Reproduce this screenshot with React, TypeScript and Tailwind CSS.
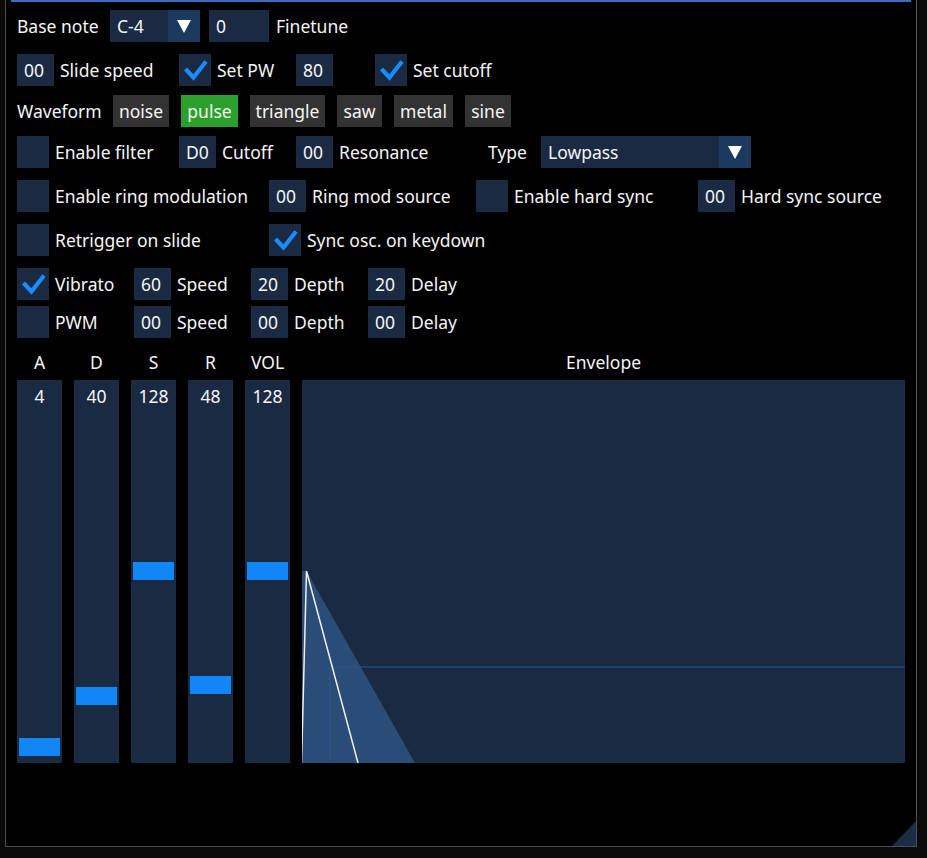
import React from "react";

const FONT = { fontFamily: '"Noto Sans", "Open Sans", sans-serif' };

function Frame({ value, w = 37 }: { value: string; w?: number }) {
	return (
		<div
			className="h-8 shrink-0 bg-[#1a2a42] pl-[7px] flex items-center whitespace-nowrap"
			style={{ width: w }}
		>
			{value}
		</div>
	);
}

function Check({ on = false }: { on?: boolean }) {
	return (
		<div className="w-8 h-8 shrink-0 bg-[#1a2a42]">
			{on && (
				<svg width="32" height="32" viewBox="0 0 32 32">
					<path
						d="M6.5 15 L14.5 23.5 L27 7.5"
						fill="none"
						stroke="#1a8cff"
						strokeWidth="4.2"
					/>
				</svg>
			)}
		</div>
	);
}

function Label({ text, w }: { text: string; w?: number }) {
	return (
		<span
			className="shrink-0 whitespace-nowrap"
			style={w ? { width: w } : undefined}
		>
			{text}
		</span>
	);
}

function Combo({ value, w, arrowW = 32 }: { value: string; w: number; arrowW?: number }) {
	return (
		<div className="h-8 shrink-0 flex" style={{ width: w }}>
			<div className="flex-1 bg-[#1a2a42] pl-[7px] flex items-center">{value}</div>
			<div
				className="bg-[#1c3a5e] flex items-center justify-center"
				style={{ width: arrowW }}
			>
				<svg width="14" height="13" viewBox="0 0 14 13">
					<path d="M0 0 H14 L7 13 Z" fill="#ffffff" />
				</svg>
			</div>
		</div>
	);
}

function WaveBtn({ text, w, active = false }: { text: string; w: number; active?: boolean }) {
	return (
		<div
			className={
				"h-8 shrink-0 flex items-center justify-center " +
				(active ? "bg-[#2ca02c]" : "bg-[#333333]")
			}
			style={{ width: w }}
		>
			{text}
		</div>
	);
}

const sliders = [
	{ name: "A", value: "4", grab: 358 },
	{ name: "D", value: "40", grab: 307 },
	{ name: "S", value: "128", grab: 182 },
	{ name: "R", value: "48", grab: 296 },
	{ name: "VOL", value: "128", grab: 182 },
];

export default function App() {
	return (
		<div
			className="w-[927px] h-[858px] bg-[#0a0a0a] text-[#f5f5f5] text-[17.5px] overflow-hidden"
			style={FONT}
		>
			<div className="relative ml-[5px] w-[912px] h-[847px] bg-black border-l border-r border-b border-[#4d4d55]">
				{/* tab underline */}
				<div className="ml-[5px] mr-[5px] h-[2px] bg-[#3a6ec4]" />

				<div className="pl-[11px] pt-[8px]">
					{/* Base note */}
					<div className="flex items-center h-8">
						<Label text="Base note" w={93} />
						<Combo value="C-4" w={90} />
						<div className="ml-[9px]">
							<Frame value="0" w={60} />
						</div>
						<span className="ml-[7px]">Finetune</span>
					</div>

					{/* Slide / PW / cutoff */}
					<div className="flex items-center h-8 mt-[12px]">
						<Frame value="00" />
						<div className="w-[6px]" />
						<Label text="Slide speed" w={119} />
						<Check on />
						<div className="w-[6px]" />
						<Label text="Set PW" w={79} />
						<Frame value="80" />
						<div className="w-[42px]" />
						<Check on />
						<span className="ml-[6px]">Set cutoff</span>
					</div>

					{/* Waveform */}
					<div className="flex items-center h-8 mt-[9px] gap-[12px]">
						<Label text="Waveform" w={84} />
						<WaveBtn text="noise" w={56} />
						<WaveBtn text="pulse" w={57} active />
						<WaveBtn text="triangle" w={75} />
						<WaveBtn text="saw" w={45} />
						<WaveBtn text="metal" w={59} />
						<WaveBtn text="sine" w={46} />
					</div>

					{/* Filter */}
					<div className="flex items-center h-8 mt-[9px]">
						<Check />
						<div className="w-[6px]" />
						<Label text="Enable filter" w={124} />
						<Frame value="D0" />
						<div className="w-[6px]" />
						<Label text="Cutoff" w={74} />
						<Frame value="00" />
						<div className="w-[6px]" />
						<Label text="Resonance" w={149} />
						<Label text="Type" w={53} />
						<Combo value="Lowpass" w={210} />
					</div>

					{/* Ring mod / hard sync */}
					<div className="flex items-center h-8 mt-[12px]">
						<Check />
						<div className="w-[6px]" />
						<Label text="Enable ring modulation" w={214} />
						<Frame value="00" />
						<div className="w-[6px]" />
						<Label text="Ring mod source" w={164} />
						<Check />
						<div className="w-[6px]" />
						<Label text="Enable hard sync" w={184} />
						<Frame value="00" />
						<span className="ml-[6px]">Hard sync source</span>
					</div>

					{/* Retrigger / sync */}
					<div className="flex items-center h-8 mt-[12px]">
						<Check />
						<div className="w-[6px]" />
						<Label text="Retrigger on slide" w={214} />
						<Check on />
						<span className="ml-[6px]">Sync osc. on keydown</span>
					</div>

					{/* Vibrato / PWM */}
					{[
						{ name: "Vibrato", on: true, vals: ["60", "20", "20"] },
						{ name: "PWM", on: false, vals: ["00", "00", "00"] },
					].map((r, i) => (
						<div
							key={r.name}
							className={"flex items-center h-8 " + (i === 0 ? "mt-[12px]" : "mt-[6px]")}
						>
							<Check on={r.on} />
							<div className="w-[6px]" />
							<Label text={r.name} w={79} />
							<Frame value={r.vals[0]} />
							<div className="w-[6px]" />
							<Label text="Speed" w={74} />
							<Frame value={r.vals[1]} />
							<div className="w-[6px]" />
							<Label text="Depth" w={74} />
							<Frame value={r.vals[2]} />
							<span className="ml-[6px]">Delay</span>
						</div>
					))}

					{/* ADSR + envelope */}
					<div className="flex gap-[12px] mt-[12px]">
						{sliders.map((s) => (
							<div key={s.name} className="w-[45px] shrink-0 flex flex-col">
								<div className="h-[24px] text-center leading-[24px]">{s.name}</div>
								<div className="mt-[6px] relative h-[383px] bg-[#1a2a42]">
									<div className="text-center pt-[3px]">{s.value}</div>
									<div
										className="absolute left-[2px] right-[2px] h-[18px] bg-[#1187f7]"
										style={{ top: s.grab }}
									/>
								</div>
							</div>
						))}
						<div className="w-[603px] shrink-0 flex flex-col">
							<div className="h-[24px] text-center leading-[24px]">Envelope</div>
							<div className="mt-[6px] h-[383px] bg-[#1a2a42]">
								<svg width="603" height="383" viewBox="0 0 603 383">
									<polygon points="0,383 0,191 4.5,191 113,383" fill="#2b4c77" />
									<line x1="28" y1="287" x2="603" y2="287" stroke="#2f5588" strokeWidth="1" />
									<line x1="28" y1="287" x2="28" y2="383" stroke="#2f5588" strokeWidth="1" />
									<polyline
										points="-0.5,383 4.5,191 56,383"
										fill="none"
										stroke="#f0f0f0"
										strokeWidth="1.5"
									/>
								</svg>
							</div>
						</div>
					</div>
				</div>

				{/* resize grip */}
				<svg className="absolute right-0 bottom-0" width="24" height="25" viewBox="0 0 24 25">
					<path d="M0 25 L24 25 L24 0 Z" fill="#1c2d46" />
				</svg>
			</div>
		</div>
	);
}
